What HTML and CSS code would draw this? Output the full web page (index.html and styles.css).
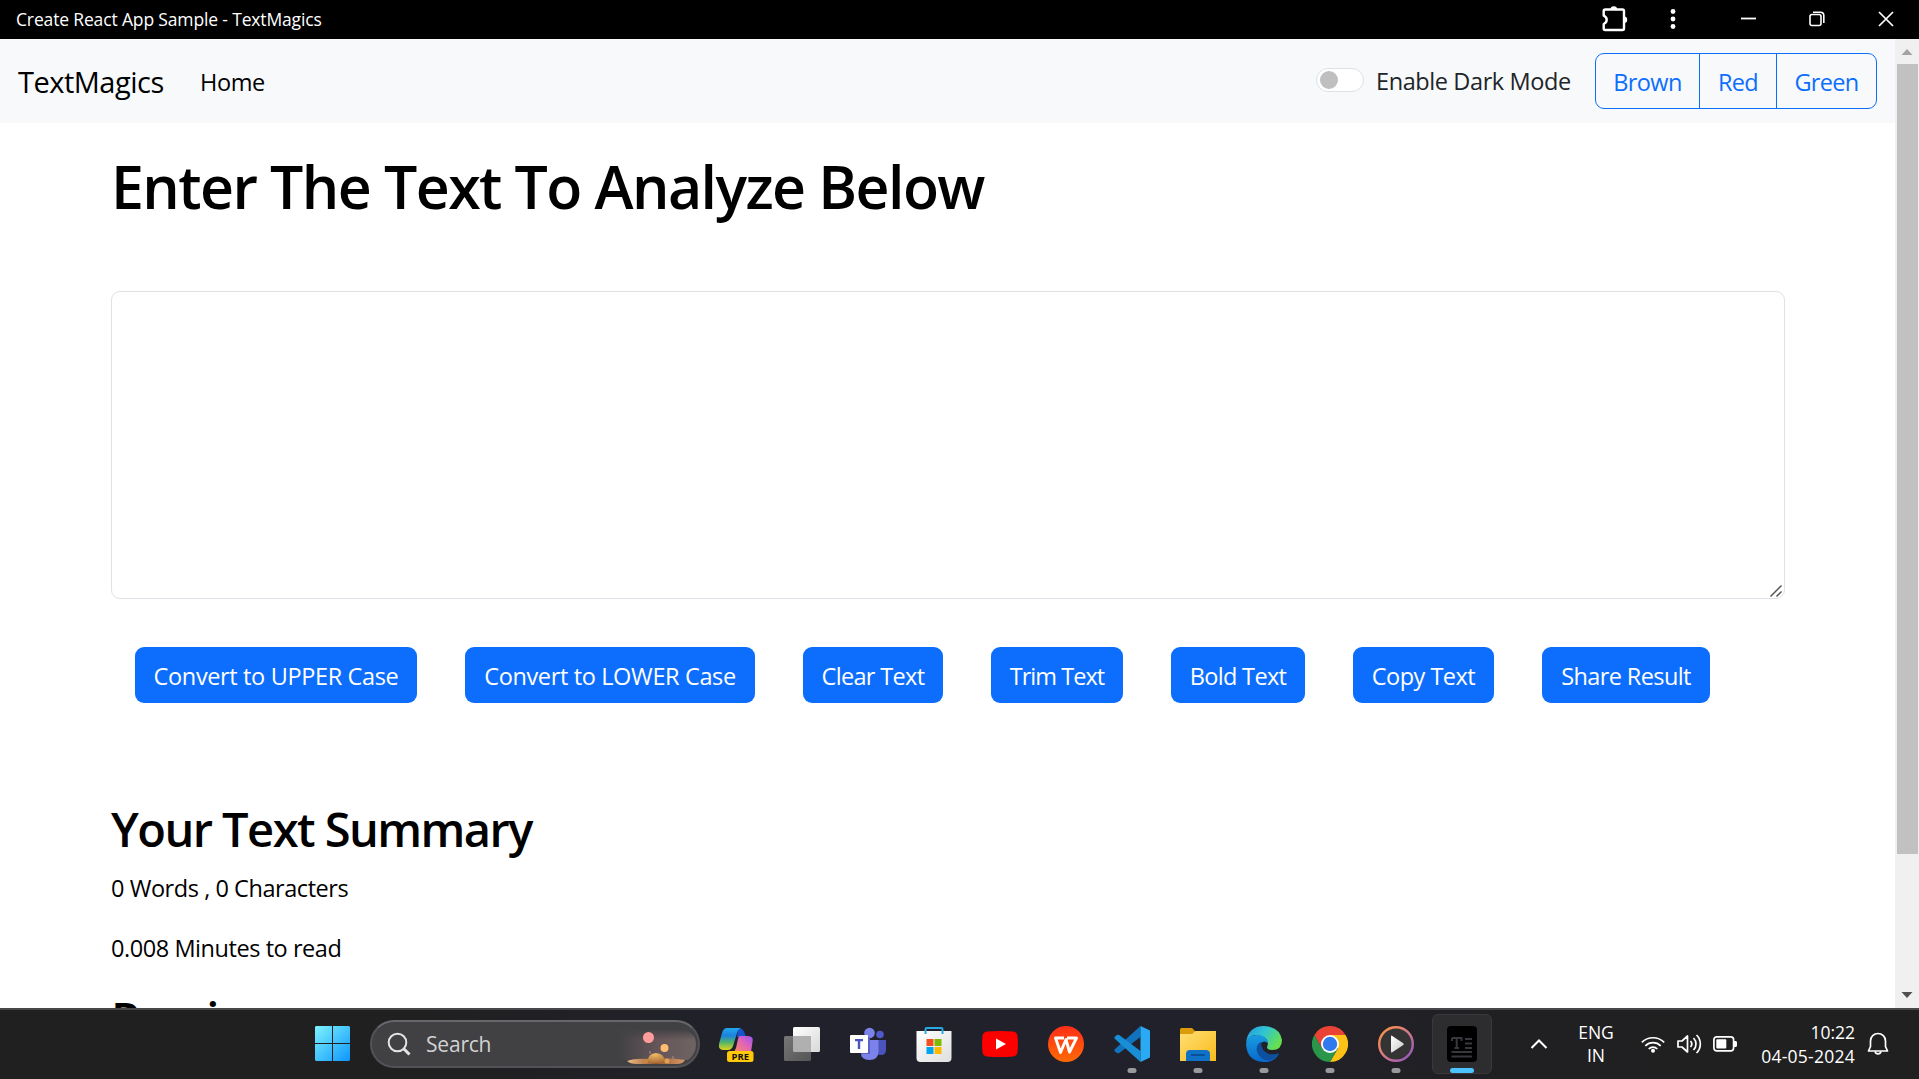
FILE: index.html
```html
<!DOCTYPE html>
<html lang="en">
<head>
<meta charset="utf-8">
<title>Create React App Sample - TextMagics</title>
<link rel="stylesheet" href="styles.css">
</head>
<body>
<div class="screen">
  <header class="titlebar">
    <span class="titlebar-text">Create React App Sample - TextMagics</span>
    <div class="titlebar-icons">
      <svg class="ti-puzzle" width="26" height="26" viewBox="0 0 26 26" fill="none" stroke="#fff" stroke-width="2.400" stroke-linejoin="round"><path d="M1.700 5a1.500 1.500 0 0 1 1.500-1.500H20.500A1.500 1.500 0 0 1 22 5V22.500a1.500 1.500 0 0 1-1.500 1.500H3.200a1.500 1.500 0 0 1-1.500-1.500V18q3-1.300 3-4.200T1.700 9.600z"/><path d="M8.500 3.500a3.300 3.300 0 0 1 6.600 0zM22 10.500a3.200 3.200 0 0 1 0 6.400z" fill="#fff" stroke="none"/></svg>
      <svg class="ti-dots" width="6" height="22" viewBox="0 0 6 22" fill="#fff"><circle cx="3" cy="3.500" r="2.400"/><circle cx="3" cy="11" r="2.400"/><circle cx="3" cy="18.500" r="2.400"/></svg>
      <svg class="ti-min" width="16" height="16" viewBox="0 0 16 16"><path d="M0 7.500h15" stroke="#fff" stroke-width="1.800"/></svg>
      <svg class="ti-restore" width="16" height="16" viewBox="0 0 16 16" fill="none" stroke="#fff" stroke-width="1.600"><rect x="1" y="3.500" width="11" height="11" rx="2"/><path d="M4 1.200h7.500a3.300 3.300 0 0 1 3.300 3.300V12"/></svg>
      <svg class="ti-close" width="16" height="16" viewBox="0 0 16 16"><path d="M1 1l14 14M15 1L1 15" stroke="#fff" stroke-width="1.700"/></svg>
    </div>
  </header>

  <div class="viewport">
    <div class="page">
      <nav class="navbar">
        <span class="brand">TextMagics</span>
        <span class="nav-link">Home</span>
        <div class="mode">
          <span class="switch"><span class="knob"></span></span>
          <span class="mode-label">Enable Dark Mode</span>
        </div>
        <div class="btn-group">
          <button class="btn-outline brown">Brown</button>
          <button class="btn-outline red">Red</button>
          <button class="btn-outline green">Green</button>
        </div>
      </nav>
      <main class="container">
        <h1 class="heading">Enter The Text To Analyze Below</h1>
        <div class="editor">
          <svg class="grip" width="14" height="14" viewBox="0 0 14 14" stroke="#555" stroke-width="1.500"><path d="M1.500 12.500L12.500 1.500M7.500 12.500L12.500 7.500"/></svg>
        </div>
        <div class="actions">
          <button class="btn b1">Convert to UPPER Case</button>
          <button class="btn b2">Convert to LOWER Case</button>
          <button class="btn b3">Clear Text</button>
          <button class="btn b4">Trim Text</button>
          <button class="btn b5">Bold Text</button>
          <button class="btn b6">Copy Text</button>
          <button class="btn b7">Share Result</button>
        </div>
        <h2 class="subheading">Your Text Summary</h2>
        <p class="stat words">0 Words , 0 Characters</p>
        <p class="stat minutes">0.008 Minutes to read</p>
        <h2 class="subheading preview">Preview</h2>
      </main>
    </div>
    <aside class="scrollbar">
      <svg class="arrow" width="24" height="25" viewBox="0 0 24 25"><path d="M6.500 16L12 10l5.500 6z" fill="#a3a3a3"/></svg>
      <div class="thumb"></div>
      <svg class="arrow arrow-down" width="24" height="25" viewBox="0 0 24 25"><path d="M6.500 9h11L12 15z" fill="#505050"/></svg>
    </aside>
  </div>

  <footer class="taskbar">
    <svg class="start" width="36" height="36" viewBox="0 0 36 36"><defs><linearGradient id="win" x1="0" y1="0" x2="36" y2="36" gradientUnits="userSpaceOnUse"><stop offset="0" stop-color="#7df3ff"/><stop offset="1" stop-color="#0a93fb"/></linearGradient></defs><path d="M1 0h16v17H0V1zM18 0h16l1 1v16H18zM0 18h17v17H1l-1-1zM18 18h17v16l-1 1H18z" fill="url(#win)"/></svg>
    <div class="search">
      <svg class="lens" width="24" height="24" viewBox="0 0 24 24" fill="none" stroke="#e4e4e6"><circle cx="10.500" cy="10.500" r="8.800" stroke-width="2"/><path d="M17 17l5.500 5.500" stroke-width="3"/></svg>
      <span class="search-text">Search</span>
      <svg class="scene" width="80" height="44" viewBox="0 0 80 44"><defs><linearGradient id="sky" x1="0" y1="0" x2="1" y2="0"><stop offset="0" stop-color="#8a6b70" stop-opacity="0"/><stop offset=".5" stop-color="#8a6b70" stop-opacity=".5"/><stop offset="1" stop-color="#7d706c" stop-opacity=".75"/></linearGradient><linearGradient id="skyv" x1="0" y1="0" x2="0" y2="1"><stop offset="0" stop-color="#424144"/><stop offset=".55" stop-color="#424144" stop-opacity="0"/></linearGradient><linearGradient id="sand" x1="0" y1="0" x2="1" y2="0"><stop offset="0" stop-color="#f0bc85"/><stop offset=".5" stop-color="#96582f"/><stop offset="1" stop-color="#d79a68"/></linearGradient><radialGradient id="dome" cx=".4" cy=".1" r="1"><stop offset="0" stop-color="#f0bd68"/><stop offset="1" stop-color="#a4652f"/></radialGradient></defs><path d="M0 8h68q10 4 10 14t-8 16H0z" fill="url(#sky)"/><path d="M0 7h80v20H0z" fill="url(#skyv)"/><circle cx="30.500" cy="15.500" r="5.500" fill="#ff9d9d"/><circle cx="46.500" cy="26" r="4" fill="#ffbd70"/><path d="M9 39q8-3 22-2 20-2 36 1-2 4-8 4H19q-7 0-10-3z" fill="url(#sand)"/><path d="M29 41q1-10 9-10t10 10z" fill="url(#dome)"/><circle cx="28" cy="39" r="2.300" fill="#c98643"/><circle cx="49" cy="39" r="2.500" fill="#dfa158"/><path d="M32 29v3M55 34v3" stroke="#a8938d"/></svg>
    </div>
    <div class="apps">
      <div class="app"><svg width="36" height="36" viewBox="0 0 36 36"><defs><linearGradient id="cpa" x1="0" y1="0" x2="0" y2="1"><stop offset="0" stop-color="#22a7ee"/><stop offset=".35" stop-color="#1b82dd"/><stop offset=".65" stop-color="#50b46b"/><stop offset="1" stop-color="#e0d41d"/></linearGradient><linearGradient id="cpb" x1="1" y1="0" x2="0" y2="1"><stop offset="0" stop-color="#9a54f2"/><stop offset=".45" stop-color="#e064b8"/><stop offset="1" stop-color="#ff8c58"/></linearGradient></defs><path d="M20 2q5 0 6.500 5l1.500 4h-9z" fill="#1753cf"/><path d="M9 2h14q-3 1-4 5l-4 13q-1.500 4-5 4H6q-6 0-5-6L4 7q1.500-5 5-5z" fill="url(#cpa)"/><path d="M22 10h8q6 0 4.500 6l-1.500 10H15q2-1 3-4l2-9q.5-3 2-3z" fill="url(#cpb)"/><rect x="9" y="25" width="26.500" height="11" rx="2.500" fill="#ffc909"/><text x="22.300" y="33.800" text-anchor="middle" class="pre">PRE</text></svg></div>
      <div class="app"><svg width="36" height="36" viewBox="0 0 36 36"><defs><linearGradient id="tva" x1="0" y1="0" x2="1" y2="1"><stop offset="0" stop-color="#fff"/><stop offset="1" stop-color="#d8d8d8"/></linearGradient><linearGradient id="tvb" x1="0" y1="0" x2="1" y2="1"><stop offset="0" stop-color="#777"/><stop offset="1" stop-color="#555"/></linearGradient></defs><rect x="9" y="1" width="27" height="25" rx="1.500" fill="url(#tva)"/><rect x="0" y="10" width="27" height="25" rx="1.500" fill="url(#tvb)"/><path d="M9 10h18v16H10.500Q9 26 9 24.500z" fill="#b0b0b0"/></svg></div>
      <div class="app"><svg width="36" height="36" viewBox="0 0 36 36"><circle cx="30" cy="8.500" r="3.800" fill="#5059c9"/><path d="M25 14h11v10q0 5-5 5t-6-4z" fill="#4b53bc"/><circle cx="19.500" cy="7" r="5.300" fill="#7b83eb"/><path d="M11 14h17.500v11q0 9-9 9T11 26z" fill="#7b83eb"/><path d="M14 11h6v17h-9v-3z" fill="#5b62c6"/><rect x="0" y="9" width="18" height="18" rx="1" fill="#fff"/><path d="M5 13h8v2.200h-2.800V23H7.800v-7.800H5z" fill="#4b53bc"/></svg></div>
      <div class="app"><svg width="36" height="36" viewBox="0 0 36 36"><defs><linearGradient id="bag" x1="0" y1="0" x2="1" y2="1"><stop offset="0" stop-color="#fff"/><stop offset="1" stop-color="#dedede"/></linearGradient></defs><path d="M.5 5h35v27q0 4-4 4h-27q-4 0-4-4z" fill="url(#bag)"/><path d="M9.500 8V3.200Q9.500 2 10.700 2h14.600q1.200 0 1.200 1.200V8" fill="none" stroke="#29a9e4" stroke-width="2"/><path d="M10.500 13h7v7h-7z" fill="#f25022"/><path d="M18.500 13h7v7h-7z" fill="#7fba00"/><path d="M10.500 21h7v7h-7z" fill="#00a4ef"/><path d="M18.500 21h7v7h-7z" fill="#ffb900"/></svg></div>
      <div class="app"><svg width="36" height="36" viewBox="0 0 36 36"><path d="M5 5.500q13-1 26 0 4 .3 4.500 4.500.8 8 0 16-.5 4-4.500 4.500-13 1-26 0Q1 30 .5 26q-.8-8 0-16Q1 6 5 5.500z" fill="red"/><path d="M14 12.500v11l10-5.500z" fill="#fff"/></svg></div>
      <div class="app"><svg width="36" height="36" viewBox="0 0 36 36"><defs><linearGradient id="wps" x1="0" y1="0" x2="0" y2="1"><stop offset="0" stop-color="#ff2d18"/><stop offset="1" stop-color="#ff6a06"/></linearGradient></defs><circle cx="18" cy="18" r="18" fill="url(#wps)"/><path d="M16 12H7.500l5 14.500L18 13.500l3.500 12.500 7-14H19" fill="none" stroke="#fff" stroke-width="2.900" stroke-linejoin="round"/></svg></div>
      <div class="app"><svg width="36" height="36" viewBox="0 0 36 36"><path d="M26.500 0L1 23q-1.200 1.200 0 2.400L3 27q1 .6 2.200 0L26.500 11z" fill="#1173bd"/><path d="M26.500 36L1 13q-1.200-1.200 0-2.400L3 9q1-.6 2.200 0L26.500 25z" fill="#188ed6"/><path d="M26.500 0L36 4.500v27L26.500 36z" fill="#2aaaf4"/></svg><i class="dot"></i></div>
      <div class="app"><svg width="36" height="36" viewBox="0 0 36 36"><defs><linearGradient id="fld" x1="0" y1="0" x2="1" y2="1"><stop offset="0" stop-color="#ffdf76"/><stop offset="1" stop-color="#f9bb1a"/></linearGradient></defs><path d="M0 3.500Q0 2 1.500 2H12l4 4-3 5H0z" fill="#dc9c08"/><path d="M0 8h12l3.500-3H36v30H0z" fill="url(#fld)"/><path d="M6 35v-7q0-4 4-4h16q4 0 4 4v7z" fill="#0f72c7"/><path d="M11 29h14" stroke="#0a4c91" stroke-width="1.800"/></svg><i class="dot"></i></div>
      <div class="app"><svg width="36" height="36" viewBox="0 0 36 36"><defs><linearGradient id="eda" x1="0" y1="0" x2="1" y2=".5"><stop offset="0" stop-color="#2497df"/><stop offset=".5" stop-color="#2fc4d4"/><stop offset="1" stop-color="#65df50"/></linearGradient><linearGradient id="edb" x1="0" y1="0" x2="0" y2="1"><stop offset="0" stop-color="#199de0"/><stop offset="1" stop-color="#0868cc"/></linearGradient></defs><path d="M0 17Q2 0 18 0q16 1 18 14 0 10-10 10-5 0-5-3l1-3q0-8-12-9Q3 9 0 17z" fill="url(#eda)"/><path d="M0 18Q1 9 11 9q10 0 11 8-4-3-7 0-4 7 3 12 8 5 15-1-6 9-16 8Q1 35 0 18z" fill="url(#edb)"/><path d="M15 16q-7 4-3 12 5 8 13 6 5-2 8-7-5 2-10 1-8-3-8-12z" fill="#0c509f"/></svg><i class="dot"></i></div>
      <div class="app"><svg width="36" height="36" viewBox="0 0 36 36"><path d="M18 9h15.600A18 18 0 0 1 18 36l7.800-13.500z" fill="#fbc116"/><path d="M2.400 9A18 18 0 0 0 18 36l7.800-13.500L18 18l-7.800 4.500z" fill="#29964a"/><path d="M18 9h15.600A18 18 0 0 0 2.400 9l7.800 13.500z" fill="#ea4335"/><circle cx="18" cy="18" r="9" fill="#fff"/><circle cx="18" cy="18" r="7.200" fill="#3079ee"/></svg><i class="dot"></i></div>
      <div class="app"><svg width="36" height="36" viewBox="0 0 36 36"><defs><linearGradient id="mp" x1="0" y1="0" x2="1" y2="1"><stop offset="0" stop-color="#ff963c"/><stop offset=".5" stop-color="#d67a87"/><stop offset="1" stop-color="#8a52c9"/></linearGradient><linearGradient id="mpt" x1="0" y1="0" x2="1" y2="1"><stop offset="0" stop-color="#fff"/><stop offset="1" stop-color="#c8c8c8"/></linearGradient></defs><circle cx="18" cy="18" r="16.800" fill="#343434" stroke="url(#mp)" stroke-width="2.400"/><path d="M13 10.500v15q0 1.500 1.300.7l11-7.200q1-.9 0-1.800l-11-7.300Q13 9 13 10.500z" fill="url(#mpt)"/></svg><i class="dot"></i></div>
      <div class="app active"><svg width="36" height="36" viewBox="0 0 36 36"><rect x="3" y="0" width="30" height="36" rx="4" fill="#000"/><path d="M8 12h9.500v3M8 12v3M12.700 12v10M10.500 22h4.500" fill="none" stroke="#39393d" stroke-width="2"/><path d="M21 13h7M21 17.500h7M21 22h7M7.500 26h20.500M7.500 30.500h20.500" stroke="#39393d" stroke-width="2"/></svg><i class="dot"></i></div>
    </div>
    <div class="tray">
      <svg class="chevron" width="18" height="12" viewBox="0 0 18 12" fill="none" stroke="#fff" stroke-width="2"><path d="M1.500 10L9 2.500l7.500 7.500"/></svg>
      <div class="lang"><span>ENG</span><span>IN</span></div>
      <svg class="wifi" width="24" height="18" viewBox="0 0 24 18" fill="none" stroke="#fff" stroke-width="1.700"><path d="M.8 7.300a16 16 0 0 1 22.400 0M4.300 10.800a11 11 0 0 1 15.400 0M7.700 14a6 6 0 0 1 8.600 0"/><circle cx="12" cy="15.800" r="2" fill="#fff" stroke="none"/></svg>
      <svg class="speaker" width="25" height="20" viewBox="0 0 25 20" fill="none" stroke="#fff" stroke-width="1.700" stroke-linejoin="round"><path d="M1 7h4l5.500-5v16L5 13H1z"/><path d="M13.500 7a4.500 4.500 0 0 1 0 6M16.500 4a8.500 8.500 0 0 1 0 12M19.500 1a12.500 12.500 0 0 1 0 18"/></svg>
      <svg class="battery" width="25" height="16" viewBox="0 0 25 16"><rect x=".9" y=".9" width="19.700" height="14" rx="2.800" fill="none" stroke="#fff" stroke-width="1.700"/><rect x="3.300" y="3.300" width="10" height="9.200" rx="1" fill="#fff"/><path d="M21 5h2l1 1v4l-1 1h-2z" fill="#fff"/></svg>
      <div class="clock"><span class="time">10:22</span><span class="date">04-05-2024</span></div>
      <svg class="bell" width="22" height="24" viewBox="0 0 22 24" fill="none" stroke="#fff" stroke-width="1.700" stroke-linejoin="round"><path d="M1.500 19l2-4.500V9a7.500 7.500 0 0 1 15 0v5.500l2 4.500z"/><path d="M8 19.500a3.100 3.100 0 0 0 6 0"/></svg>
    </div>
  </footer>
</div>
</body>
</html>
```
FILE: styles.css
```css
* { box-sizing: border-box; }
body { margin: 0; font-family: "Open Sans", "Noto Sans", sans-serif; color: #000; }
svg { display: block; flex: none; }
button { font: inherit; }
.screen { width: 1919px; height: 1079px; display: flex; flex-direction: column; overflow: hidden; background: #fff; white-space: nowrap; }

/* window title bar */
.titlebar { height: 39px; flex: none; background: #000; color: #fff; display: flex; align-items: center; justify-content: space-between; padding: 0 25px 1px 16px; }
.titlebar-text { font-size: 17.500px; letter-spacing: -0.15px; }
.titlebar-icons { display: flex; align-items: center; }
.ti-dots { margin-left: 42px; }
.ti-min { margin-left: 65px; }
.ti-restore { margin-left: 52px; }
.ti-close { margin-left: 53px; }

/* scrolled page */
.viewport { height: 969px; flex: none; display: flex; overflow: hidden; }
.page { flex: 1; overflow: hidden; }
.navbar { height: 84px; background: #f8f9fa; display: flex; align-items: center; padding: 0 18px; }
.brand { font-size: 29px; letter-spacing: -0.5px; width: 182px; }
.nav-link { font-size: 23.500px; letter-spacing: -0.4px; padding-top: 2px; }
.mode { display: flex; align-items: center; margin-left: auto; }
.switch { width: 48px; height: 24px; border: 1px solid #dee2e6; border-radius: 12px; background: #fff; padding: 2px 3px; margin-bottom: 3px; }
.knob { display: block; width: 18px; height: 18px; border-radius: 50%; background: #bfbfbf; }
.mode-label { font-size: 23.500px; letter-spacing: -0.4px; color: #212529; margin-left: 12px; width: 219px; }
.btn-group { display: flex; width: 282px; height: 56px; border: 1px solid #0d6efd; border-radius: 9px; overflow: hidden; }
.btn-outline { border: 0; border-left: 1px solid #0d6efd; background: none; color: #0d6efd; font-size: 23.500px; letter-spacing: -0.65px; padding: 2px 0 0; text-align: center; }
.btn-outline.brown { border-left: 0; width: 103px; }
.btn-outline.red { width: 77px; }
.btn-outline.green { flex: 1; }

.container { padding: 0 0 0 111px; }
.heading { margin: 27px 0 0; font-size: 59px; font-weight: 600; letter-spacing: -1.57px; line-height: 72px; }
.editor { margin-top: 69px; width: 1674px; height: 308px; border: 1px solid #dee2e6; border-radius: 9px; display: flex; align-items: flex-end; justify-content: flex-end; padding: 0 1px 0 0; }
.actions { display: flex; gap: 48px; margin: 48px 0 0 24px; }
.btn { height: 56px; border: 0; border-radius: 9px; background: #0d6efd; color: #fff; font-size: 23.500px; letter-spacing: -0.65px; padding: 2px 0 0; text-align: center; }
.b1 { width: 282px; letter-spacing: -0.36px; }
.b2 { width: 290px; letter-spacing: -0.36px; }
.b3 { width: 140px; }
.b4 { width: 132px; letter-spacing: -0.95px; }
.b5 { width: 134px; }
.b6 { width: 141px; letter-spacing: -0.5px; }
.b7 { width: 168px; letter-spacing: -0.6px; }
.subheading { margin: 97px 0 0; font-size: 47px; font-weight: 600; letter-spacing: -1.55px; line-height: 58px; }
.stat { margin: 12px 0 24px; font-size: 23.500px; letter-spacing: -0.44px; line-height: 36px; }
.subheading.preview { margin: 0; }

.scrollbar { width: 24px; background: #f0f0f0; display: flex; flex-direction: column; align-items: center; }
.thumb { width: 21px; height: 790px; background: #c1c1c1; }
.arrow-down { margin-top: auto; }

/* desktop taskbar */
.taskbar { flex: 1; border-top: 2px solid #48484a; background: linear-gradient(90deg, #202020 0, #202020 20%, #21212b 40%, #21212b 62%, #202022 80%, #202020 100%); color: #fff; display: flex; align-items: center; padding: 0 0 1px 315px; }
.search { width: 330px; height: 48px; margin-left: 19px; border: 2px solid #535256; border-top-color: #67666a; border-radius: 24px; background: #414043; display: flex; align-items: center; padding-left: 15px; overflow: hidden; }
.search-text { font-size: 21px; letter-spacing: -0.2px; color: #d2d2d3; margin-left: 15px; }
.scene { margin-left: auto; }
.apps { display: flex; margin-left: 6px; gap: 6px; }
.app { width: 60px; height: 60px; border-radius: 6px; position: relative; display: grid; place-items: center; }
.app.active { background: #2d2d30; border: 1px solid #39393c; }
.dot { position: absolute; bottom: 1px; left: 50%; transform: translateX(-50%); width: 9px; height: 5px; border-radius: 3px; background: #9a9a9c; }
.active .dot { width: 24px; background: #4cc2ff; bottom: 0; }
.pre { font: 700 9.500px "Open Sans", sans-serif; fill: #111; }
.tray { display: flex; align-items: center; margin-left: 38px; }
.lang { display: flex; flex-direction: column; align-items: center; width: 40px; margin-left: 28px; font-size: 17.500px; line-height: 23px; }
.wifi { margin-left: 25px; }
.speaker { margin-left: 12px; }
.battery { margin-left: 11px; }
.clock { display: flex; flex-direction: column; align-items: flex-end; width: 117px; font-size: 17.500px; line-height: 24px; }
.date { letter-spacing: 0.25px; }
.bell { margin-left: 12px; }
```
